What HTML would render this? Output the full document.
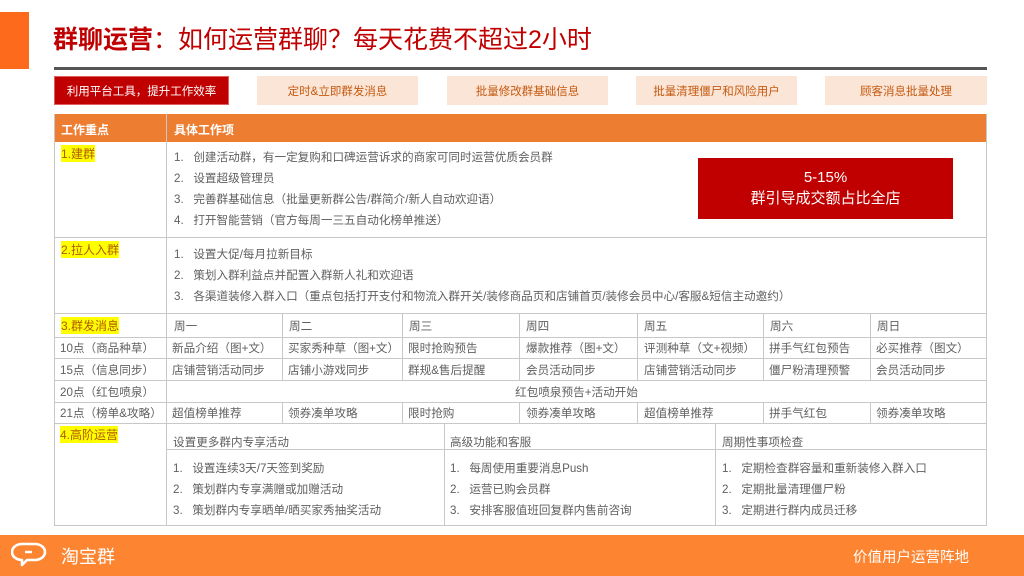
<!DOCTYPE html>
<html><head><meta charset="utf-8"><style>
*{margin:0;padding:0;box-sizing:border-box}
body{width:1024px;height:576px;position:relative;background:#fff;overflow:hidden;font-family:"Liberation Sans","Noto Sans CJK SC",sans-serif;color:#606060;font-size:11.6px}
.a{position:absolute;white-space:nowrap}
.h{position:absolute;background:#c8c8c8;height:1px}
.v{position:absolute;background:#c8c8c8;width:1px}
.tab{position:absolute;top:76px;height:29px;background:#fbe5d6;color:#c55a11;font-size:11.5px;display:flex;align-items:center;justify-content:center}
.y{background:#ffff00;color:#b05a00}
.t{line-height:21px}
</style></head><body>
<div class="a" style="left:0;top:12px;width:29px;height:57px;background:#fd6a1c"></div>
<div class="a" style="left:53px;top:23px;font-size:25px;color:#c00000;line-height:34px"><b>群聊运营</b>：如何运营群聊？每天花费不超过2小时</div>
<div class="a" style="left:54px;top:67px;width:933px;height:3px;background:#555"></div>
<div class="tab" style="left:54px;width:175px;background:#c00000;color:#fff;border:1px solid #e06060">利用平台工具，提升工作效率</div>
<div class="tab" style="left:257px;width:161px">定时&amp;立即群发消息</div>
<div class="tab" style="left:447px;width:161px">批量修改群基础信息</div>
<div class="tab" style="left:636px;width:161px">批量清理僵尸和风险用户</div>
<div class="tab" style="left:825px;width:162px">顾客消息批量处理</div>

<div class="a" style="left:54px;top:114px;width:933px;height:28px;background:#ed7d31"></div>
<div class="a" style="left:61px;top:121px;color:#fff;font-weight:bold;font-size:12px">工作重点</div>
<div class="a" style="left:174px;top:121px;color:#fff;font-weight:bold;font-size:12px">具体工作项</div>

<div class="v" style="left:54px;top:114px;height:412px"></div>
<div class="v" style="left:986px;top:114px;height:412px"></div>
<div class="v" style="left:166px;top:114px;height:412px"></div>
<div class="h" style="left:54px;top:237px;width:933px"></div>
<div class="h" style="left:54px;top:313px;width:933px"></div>
<div class="h" style="left:54px;top:337px;width:933px"></div>
<div class="h" style="left:54px;top:358px;width:933px"></div>
<div class="h" style="left:54px;top:380px;width:933px"></div>
<div class="h" style="left:54px;top:402px;width:933px"></div>
<div class="h" style="left:54px;top:423px;width:933px"></div>
<div class="h" style="left:54px;top:525px;width:933px"></div>
<div class="h" style="left:166px;top:449px;width:821px"></div>
<div class="v" style="left:282px;top:313px;height:67px"></div>
<div class="v" style="left:402px;top:313px;height:67px"></div>
<div class="v" style="left:519px;top:313px;height:67px"></div>
<div class="v" style="left:637px;top:313px;height:67px"></div>
<div class="v" style="left:763px;top:313px;height:67px"></div>
<div class="v" style="left:870px;top:313px;height:67px"></div>
<div class="v" style="left:282px;top:402px;height:21px"></div>
<div class="v" style="left:402px;top:402px;height:21px"></div>
<div class="v" style="left:519px;top:402px;height:21px"></div>
<div class="v" style="left:637px;top:402px;height:21px"></div>
<div class="v" style="left:763px;top:402px;height:21px"></div>
<div class="v" style="left:870px;top:402px;height:21px"></div>
<div class="v" style="left:444px;top:423px;height:102px"></div>
<div class="v" style="left:715px;top:423px;height:102px"></div>

<div class="a y" style="left:61px;top:145px;font-size:12px">1.建群</div>
<div class="a t" style="left:174px;top:147px">1.&nbsp;&nbsp;&nbsp;创建活动群，有一定复购和口碑运营诉求的商家可同时运营优质会员群<br>2.&nbsp;&nbsp;&nbsp;设置超级管理员<br>3.&nbsp;&nbsp;&nbsp;完善群基础信息（批量更新群公告/群简介/新人自动欢迎语）<br>4.&nbsp;&nbsp;&nbsp;打开智能营销（官方每周一三五自动化榜单推送）</div>
<div class="a" style="left:698px;top:158px;width:255px;height:61px;background:#c00000;color:#fff;font-size:15px;text-align:center;line-height:21px;padding-top:9px">5-15%<br>群引导成交额占比全店</div>

<div class="a y" style="left:61px;top:241px;font-size:12px">2.拉人入群</div>
<div class="a t" style="left:174px;top:244px">1.&nbsp;&nbsp;&nbsp;设置大促/每月拉新目标<br>2.&nbsp;&nbsp;&nbsp;策划入群利益点并配置入群新人礼和欢迎语<br>3.&nbsp;&nbsp;&nbsp;各渠道装修入群入口（重点包括打开支付和物流入群开关/装修商品页和店铺首页/装修会员中心/客服&amp;短信主动邀约）</div>

<div class="a y" style="left:61px;top:317px;font-size:12px">3.群发消息</div>
<div class="a" style="left:174px;top:318px">周一</div><div class="a" style="left:289px;top:318px">周二</div><div class="a" style="left:409px;top:318px">周三</div><div class="a" style="left:526px;top:318px">周四</div><div class="a" style="left:644px;top:318px">周五</div><div class="a" style="left:770px;top:318px">周六</div><div class="a" style="left:877px;top:318px">周日</div>

<div class="a" style="left:60px;top:340px">10点（商品种草）</div>
<div class="a" style="left:172px;top:340px">新品介绍（图+文）</div><div class="a" style="left:288px;top:340px">买家秀种草（图+文）</div><div class="a" style="left:408px;top:340px">限时抢购预告</div><div class="a" style="left:526px;top:340px">爆款推荐（图+文）</div><div class="a" style="left:644px;top:340px">评测种草（文+视频）</div><div class="a" style="left:769px;top:340px">拼手气红包预告</div><div class="a" style="left:876px;top:340px">必买推荐（图文）</div>

<div class="a" style="left:60px;top:362px">15点（信息同步）</div>
<div class="a" style="left:172px;top:362px">店铺营销活动同步</div><div class="a" style="left:288px;top:362px">店铺小游戏同步</div><div class="a" style="left:408px;top:362px">群规&amp;售后提醒</div><div class="a" style="left:526px;top:362px">会员活动同步</div><div class="a" style="left:644px;top:362px">店铺营销活动同步</div><div class="a" style="left:769px;top:362px">僵尸粉清理预警</div><div class="a" style="left:876px;top:362px">会员活动同步</div>

<div class="a" style="left:60px;top:384px">20点（红包喷泉）</div>
<div class="a" style="left:166px;top:384px;width:821px;text-align:center">红包喷泉预告+活动开始</div>

<div class="a" style="left:60px;top:405px">21点（榜单&amp;攻略）</div>
<div class="a" style="left:172px;top:405px">超值榜单推荐</div><div class="a" style="left:288px;top:405px">领券凑单攻略</div><div class="a" style="left:408px;top:405px">限时抢购</div><div class="a" style="left:526px;top:405px">领券凑单攻略</div><div class="a" style="left:644px;top:405px">超值榜单推荐</div><div class="a" style="left:769px;top:405px">拼手气红包</div><div class="a" style="left:876px;top:405px">领券凑单攻略</div>

<div class="a y" style="left:60px;top:426px;font-size:12px">4.高阶运营</div>
<div class="a" style="left:173px;top:434px">设置更多群内专享活动</div>
<div class="a" style="left:450px;top:434px">高级功能和客服</div>
<div class="a" style="left:722px;top:434px">周期性事项检查</div>
<div class="a t" style="left:173px;top:458px">1.&nbsp;&nbsp;&nbsp;设置连续3天/7天签到奖励<br>2.&nbsp;&nbsp;&nbsp;策划群内专享满赠或加赠活动<br>3.&nbsp;&nbsp;&nbsp;策划群内专享晒单/晒买家秀抽奖活动</div>
<div class="a t" style="left:450px;top:458px">1.&nbsp;&nbsp;&nbsp;每周使用重要消息Push<br>2.&nbsp;&nbsp;&nbsp;运营已购会员群<br>3.&nbsp;&nbsp;&nbsp;安排客服值班回复群内售前咨询</div>
<div class="a t" style="left:722px;top:458px">1.&nbsp;&nbsp;&nbsp;定期检查群容量和重新装修入群入口<br>2.&nbsp;&nbsp;&nbsp;定期批量清理僵尸粉<br>3.&nbsp;&nbsp;&nbsp;定期进行群内成员迁移</div>

<div class="a" style="left:0;top:535px;width:1024px;height:41px;background:#fd8531"></div>
<svg class="a" style="left:11px;top:542px" width="36" height="26" viewBox="0 0 36 26"><path d="M11 2 H24 A10 8 0 0 1 24 18 H16 L11 23 L11 18 A10 8 0 0 1 11 2 Z" fill="none" stroke="#fff" stroke-width="2.6" stroke-linejoin="round"/><line x1="14" y1="10" x2="21" y2="10" stroke="#fff" stroke-width="2.4"/></svg>
<div class="a" style="left:61px;top:543px;color:#fff;font-size:18px">淘宝群</div>
<div class="a" style="left:853px;top:546px;color:#fff;font-size:14.5px">价值用户运营阵地</div>
</body></html>
